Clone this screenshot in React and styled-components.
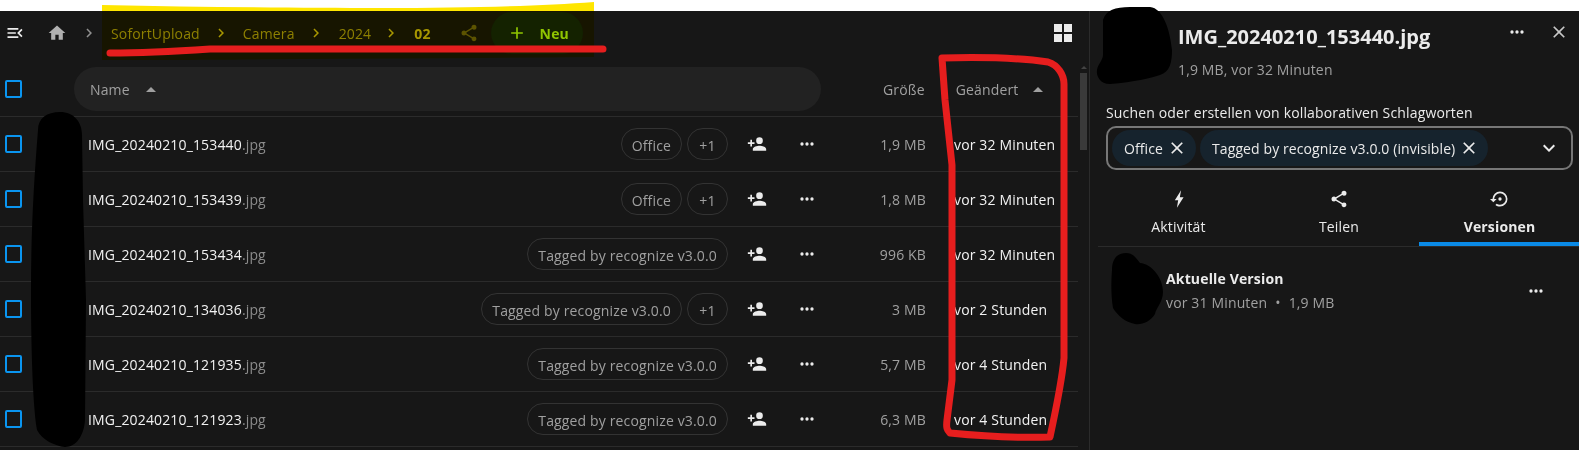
import React from "react";
import styled, { createGlobalStyle } from "styled-components";

const P = {
  menu: "M21,15.61L19.59,17L14.58,12L19.59,7L21,8.39L17.44,12L21,15.61M3,6H16V8H3V6M3,13V11H13V13H3M3,18V16H16V18H3Z",
  home: "M10,20V14H14V20H19V12H22L12,3L2,12H5V20H10Z",
  chev: "M8.59,16.58L13.17,12L8.59,7.41L10,6L16,12L10,18L8.59,16.58Z",
  share: "M18,16.08C17.24,16.08 16.56,16.38 16.04,16.85L8.91,12.7C8.96,12.47 9,12.24 9,12C9,11.76 8.96,11.53 8.91,11.3L15.96,7.19C16.5,7.69 17.21,8 18,8A3,3 0 0,0 21,5A3,3 0 0,0 18,2A3,3 0 0,0 15,5C15,5.24 15.04,5.47 15.09,5.7L8.04,9.81C7.5,9.31 6.79,9 6,9A3,3 0 0,0 3,12A3,3 0 0,0 6,15C6.79,15 7.5,14.69 8.04,14.19L15.16,18.34C15.11,18.55 15.08,18.77 15.08,19C15.08,20.61 16.39,21.91 18,21.91C19.61,21.91 20.92,20.61 20.92,19A2.92,2.92 0 0,0 18,16.08Z",
  plus: "M19,13H13V19H11V13H5V11H11V5H13V11H19V13Z",
  grid: "M3,11H11V3H3M3,21H11V13H3M13,21H21V13H13M13,3V11H21V3",
  up: "M7,15L12,10L17,15H7Z",
  person: "M15,14C12.33,14 7,15.33 7,18V20H23V18C23,15.33 17.67,14 15,14M6,10V7H4V10H1V12H4V15H6V12H9V10M15,12A4,4 0 0,0 19,8A4,4 0 0,0 15,4A4,4 0 0,0 11,8A4,4 0 0,0 15,12Z",
  dots: "M16,12A2,2 0 0,1 18,10A2,2 0 0,1 20,12A2,2 0 0,1 18,14A2,2 0 0,1 16,12M10,12A2,2 0 0,1 12,10A2,2 0 0,1 14,12A2,2 0 0,1 12,14A2,2 0 0,1 10,12M4,12A2,2 0 0,1 6,10A2,2 0 0,1 8,12A2,2 0 0,1 6,14A2,2 0 0,1 4,12Z",
  close: "M19,6.41L17.59,5L12,10.59L6.41,5L5,6.41L10.59,12L5,17.59L6.41,19L12,13.41L17.59,19L19,17.59L13.41,12L19,6.41Z",
  down: "M7.41,8.58L12,13.17L16.59,8.58L18,10L12,16L6,10L7.41,8.58Z",
  flash: "M14.5,1.5L7,13.5H11L9.5,22.5L17.5,10H13Z",
  restore: "M12,3A9,9 0 0,0 3,12H0L4,16L8,12H5A7,7 0 0,1 12,5A7,7 0 0,1 19,12A7,7 0 0,1 12,19C10.5,19 9.09,18.5 7.94,17.7L6.5,19.14C8.04,20.3 9.94,21 12,21A9,9 0 0,0 21,12A9,9 0 0,0 12,3M14,12A2,2 0 0,0 12,10A2,2 0 0,0 10,12A2,2 0 0,0 12,14A2,2 0 0,0 14,12Z",
};

const Icon = ({ d, size = 20, color = "#ebebeb" }) => (
  <svg width={size} height={size} viewBox="0 0 24 24" fill={color} style={{ display: "block", flex: "none" }}>
    <path d={d} />
  </svg>
);

const Global = createGlobalStyle`
  html, body { margin: 0; padding: 0; background: #fff; }
  body { font-family: "Open Sans", "Noto Sans", sans-serif; font-size: 14px; letter-spacing: 0.15px; color: #ebebeb; }
`;

const Page = styled.div`
  position: relative;
  width: 1579px;
  height: 450px;
  overflow: hidden;
  background: #fff;
`;
const Strip = styled.div`
  height: 11px;
  background: #fff;
`;
const Main = styled.div`
  display: flex;
  height: 439px;
  background: #171717;
`;
const Files = styled.section`
  width: 1089px;
  flex: none;
  border-right: 1px solid #2b2b2b;
  display: flex;
  flex-direction: column;
`;
const TopBar = styled.div`
  height: 44px;
  display: flex;
  align-items: center;
  flex: none;
  padding-left: 5px;
`;
const Crumb = styled.span`
  color: ${(p) => (p.$current ? "#a8a8a8" : "#8e8e8e")};
  font-weight: ${(p) => (p.$current ? 700 : 400)};
  margin-left: ${(p) => p.$gap || 0}px;
  white-space: nowrap;
`;
const Spaced = styled.span`
  display: flex;
  margin-left: ${(p) => p.$l || 0}px;
  margin-right: ${(p) => p.$r || 0}px;
`;
const NewButton = styled.div`
  width: 92px;
  height: 42px;
  border-radius: 21px;
  background: #142500;
  color: #90dc00;
  display: flex;
  align-items: center;
  padding-left: 16px;
  gap: 13px;
  box-sizing: border-box;
  font-weight: 700;
`;
const GridBtn = styled.span`
  margin-left: auto;
  margin-right: 14px;
  display: flex;
`;
const Body = styled.div`
  flex: 1;
  display: flex;
  min-height: 0;
`;
const Table = styled.div`
  width: 1078px;
  flex: none;
`;
const HeaderRow = styled.div`
  height: 62px;
  box-sizing: border-box;
  border-bottom: 1px solid #2b2b2b;
  display: flex;
  align-items: center;
  padding: 7px 0 0 5px;
`;
const NamePill = styled.div`
  width: 747px;
  height: 44px;
  margin-left: 52px;
  border-radius: 22px;
  background: #222;
  display: flex;
  align-items: center;
  padding-left: 16px;
  box-sizing: border-box;
  gap: 9px;
  color: #a0a0a0;
`;
const HeadCell = styled.div`
  color: #a0a0a0;
  display: flex;
  align-items: center;
  margin-left: ${(p) => p.$l}px;
  gap: ${(p) => p.$gap || 0}px;
`;
const Check = styled.span`
  display: block;
  width: 17px;
  height: 18px;
  border: 2px solid #0a95f0;
  border-radius: 2px;
  box-sizing: border-box;
  flex: none;
`;
const Row = styled.div`
  height: 55px;
  box-sizing: border-box;
  border-bottom: 1px solid #2b2b2b;
  display: grid;
  grid-template-columns: 88px 640px 58px 42px 98px 152px;
  align-items: center;
`;
const CheckCell = styled.div`
  padding-left: 5px;
`;
const NameCell = styled.div`
  display: flex;
  align-items: center;
  justify-content: space-between;
`;
const FileName = styled.span`
  color: #f2f2f2;
  white-space: nowrap;
`;
const Ext = styled.span`
  color: #8c8c8c;
`;
const Tags = styled.div`
  display: flex;
  gap: 5px;
`;
const Tag = styled.span`
  height: 32px;
  min-width: 41px;
  box-sizing: border-box;
  border: 1px solid #333;
  border-radius: 16px;
  padding: 2px 10px 0;
  display: flex;
  align-items: center;
  justify-content: center;
  color: #a0a0a0;
  white-space: nowrap;
`;
const CenterCell = styled.div`
  display: flex;
  justify-content: center;
`;
const SizeCell = styled.div`
  color: #a0a0a0;
  text-align: right;
`;
const DateCell = styled.div`
  color: #f2f2f2;
  padding-left: 28px;
  white-space: nowrap;
`;
const Track = styled.div`
  width: 11px;
  flex: none;
  padding-left: 2px;
  box-sizing: border-box;
`;
const TrackArrow = styled.div`
  width: 0;
  height: 0;
  margin: 11px 0 0 1px;
  border-left: 3px solid transparent;
  border-right: 3px solid transparent;
  border-bottom: 3px solid #444;
`;
const Thumb = styled.div`
  width: 7px;
  height: 77px;
  margin-top: 4px;
  background: #3a3a3a;
`;
const Sidebar = styled.aside`
  flex: 1;
  min-width: 0;
  display: flex;
  flex-direction: column;
`;
const SideHead = styled.div`
  display: flex;
  height: 92px;
  box-sizing: border-box;
  padding: 12px 0 0 88px;
  justify-content: space-between;
`;
const SideTitle = styled.div`
  font-size: 20px;
  font-weight: 700;
  letter-spacing: 0;
  color: #ebebeb;
  line-height: 28px;
`;
const SideSub = styled.div`
  color: #a0a0a0;
  margin-top: 9px;
  line-height: 20px;
`;
const SideActions = styled.div`
  display: flex;
  align-items: center;
  height: 18px;
  gap: 22px;
  padding-right: 10px;
`;
const TagLabel = styled.div`
  margin-left: 16px;
  line-height: 20px;
  color: #ebebeb;
`;
const Select = styled.div`
  margin: 3px 6px 0 16px;
  height: 44px;
  box-sizing: border-box;
  border: 2px solid #777;
  border-radius: 10px;
  display: flex;
  align-items: center;
  padding: 0 10px 0 4px;
  gap: 4px;
`;
const Chip = styled.span`
  height: 36px;
  border-radius: 18px;
  background: #16232d;
  display: flex;
  align-items: center;
  gap: 4px;
  padding: 0 9px 0 12px;
  letter-spacing: 0.1px;
  white-space: nowrap;
`;
const Chevron = styled.span`
  margin-left: auto;
  display: flex;
`;
const TabBar = styled.div`
  display: grid;
  grid-template-columns: 161px 160px 161px;
  margin: 14px 0 0 8px;
  height: 62px;
  border-bottom: 1px solid #2b2b2b;
`;
const TabItem = styled.div`
  display: flex;
  flex-direction: column;
  align-items: center;
  box-sizing: border-box;
  height: 62px;
  padding-top: 5px;
  gap: 8px;
  font-weight: ${(p) => (p.$active ? 700 : 400)};
  color: #ebebeb;
  border-bottom: ${(p) => (p.$active ? "4px solid #0a8ae6" : "0")};
`;
const VersionRow = styled.div`
  display: flex;
  justify-content: space-between;
  padding: 21px 33px 0 76px;
`;
const VersionName = styled.div`
  font-weight: 700;
  line-height: 22px;
`;
const VersionMeta = styled.div`
  color: #a0a0a0;
  margin-top: 3px;
  line-height: 20px;
  display: flex;
  gap: 8px;
`;
const VersionDots = styled.span`
  margin-top: 13px;
  display: flex;
`;
const Annotations = styled.svg`
  position: absolute;
  left: 0;
  top: 0;
  width: 1579px;
  height: 450px;
  pointer-events: none;
`;
const Highlighter = styled.path`
  fill: #ffe600;
  mix-blend-mode: multiply;
`;

const rows = [
  ["IMG_20240210_153440", ["Office", "+1"], "1,9 MB", "vor 32 Minuten"],
  ["IMG_20240210_153439", ["Office", "+1"], "1,8 MB", "vor 32 Minuten"],
  ["IMG_20240210_153434", ["Tagged by recognize v3.0.0"], "996 KB", "vor 32 Minuten"],
  ["IMG_20240210_134036", ["Tagged by recognize v3.0.0", "+1"], "3 MB", "vor 2 Stunden"],
  ["IMG_20240210_121935", ["Tagged by recognize v3.0.0"], "5,7 MB", "vor 4 Stunden"],
  ["IMG_20240210_121923", ["Tagged by recognize v3.0.0"], "6,3 MB", "vor 4 Stunden"],
];

export default function App() {
  return (
    <Page>
      <Global />
      <Strip />
      <Main>
        <Files>
          <TopBar>
            <Icon d={P.menu} size={20} />
            <Spaced $l={22}><Icon d={P.home} size={20} color="#b0b0b0" /></Spaced>
            <Spaced $l={13} $r={13}><Icon d={P.chev} size={18} color="#909090" /></Spaced>
            <Crumb>SofortUpload</Crumb>
            <Spaced $l={12}><Icon d={P.chev} size={18} color="#a8a8a8" /></Spaced>
            <Crumb $gap={13}>Camera</Crumb>
            <Spaced $l={12}><Icon d={P.chev} size={18} color="#a8a8a8" /></Spaced>
            <Crumb $gap={14}>2024</Crumb>
            <Spaced $l={11}><Icon d={P.chev} size={18} color="#a8a8a8" /></Spaced>
            <Crumb $current $gap={14}>02</Crumb>
            <Spaced $l={28} $r={12}><Icon d={P.share} size={20} color="#5c5c5c" /></Spaced>
            <NewButton><Icon d={P.plus} size={20} color="#90dc00" />Neu</NewButton>
            <GridBtn><Icon d={P.grid} size={24} /></GridBtn>
          </TopBar>
          <Body>
            <Table>
              <HeaderRow>
                <Check />
                <NamePill>Name <Icon d={P.up} size={24} color="#a0a0a0" /></NamePill>
                <HeadCell $l={62}>Größe</HeadCell>
                <HeadCell $l={31} $gap={8}>Geändert <Icon d={P.up} size={24} color="#a0a0a0" /></HeadCell>
              </HeaderRow>
              {rows.map(([name, tags, size, date]) => (
                <Row key={name}>
                  <CheckCell><Check /></CheckCell>
                  <NameCell>
                    <FileName>{name}<Ext>.jpg</Ext></FileName>
                    <Tags>{tags.map((t) => <Tag key={t}>{t}</Tag>)}</Tags>
                  </NameCell>
                  <CenterCell><Icon d={P.person} size={20} /></CenterCell>
                  <CenterCell><Icon d={P.dots} size={20} /></CenterCell>
                  <SizeCell>{size}</SizeCell>
                  <DateCell>{date}</DateCell>
                </Row>
              ))}
            </Table>
            <Track><TrackArrow /><Thumb /></Track>
          </Body>
        </Files>
        <Sidebar>
          <SideHead>
            <div>
              <SideTitle>IMG_20240210_153440.jpg</SideTitle>
              <SideSub>1,9 MB, vor 32 Minuten</SideSub>
            </div>
            <SideActions>
              <Icon d={P.dots} size={20} />
              <Icon d={P.close} size={20} color="#c8c8c8" />
            </SideActions>
          </SideHead>
          <TagLabel>Suchen oder erstellen von kollaborativen Schlagworten</TagLabel>
          <Select>
            <Chip>Office <Icon d={P.close} size={20} /></Chip>
            <Chip>Tagged by recognize v3.0.0 (invisible) <Icon d={P.close} size={20} /></Chip>
            <Chevron><Icon d={P.down} size={24} /></Chevron>
          </Select>
          <TabBar>
            <TabItem><Icon d={P.flash} size={20} />Aktivität</TabItem>
            <TabItem><Icon d={P.share} size={20} />Teilen</TabItem>
            <TabItem $active><Icon d={P.restore} size={20} />Versionen</TabItem>
          </TabBar>
          <VersionRow>
            <div>
              <VersionName>Aktuelle Version</VersionName>
              <VersionMeta><span>vor 31 Minuten</span><span>•</span><span>1,9 MB</span></VersionMeta>
            </div>
            <VersionDots><Icon d={P.dots} size={20} /></VersionDots>
          </VersionRow>
        </Sidebar>
      </Main>
      <Annotations viewBox="0 0 1579 450">
        <Highlighter d="M102 5 C200 7 300 8 380 8 C470 8 540 6 594 2 L594 57 C500 58 400 59 300 59 C220 60 150 60 102 60 Z" />
        <path d="M110 53 C150 53 180 51 210 49 C300 48 450 49 603 49" fill="none" stroke="#e61e1e" strokeWidth="7" strokeLinecap="round" />
        <path d="M942 58 C980 57 1020 58 1048 62 C1058 65 1064 75 1064 84 L1064 358 C1062 380 1058 400 1050 437 C1020 438 980 436 950 433 C947 430 946 428 947 420 L952 380 L952 165 L945 100 Z" fill="none" stroke="#e61e1e" strokeWidth="7" strokeLinejoin="round" />
        <path d="M38 130 C38 118 47 112 60 112 C74 112 82 122 82 135 L83 200 L86 300 L85 420 C84 436 76 447 65 447 C55 446 42 440 37 430 C32 400 31 330 31 290 C31 230 34 180 38 130 Z" fill="#000" />
        <path d="M1103 20 C1106 10 1115 7 1130 7 L1150 7 C1163 8 1170 30 1172 50 C1172 62 1170 72 1160 75 C1150 78 1135 82 1110 84 C1100 84 1096 76 1097 70 C1098 64 1103 60 1103 55 Z" fill="#000" />
        <path d="M1112 270 C1112 258 1118 253 1126 253 C1133 253 1136 258 1140 263 C1152 264 1163 278 1163 292 C1163 302 1156 308 1155 314 C1150 322 1142 325 1135 324 C1125 322 1118 316 1113 308 C1111 296 1111 282 1112 270 Z" fill="#000" />
      </Annotations>
    </Page>
  );
}
